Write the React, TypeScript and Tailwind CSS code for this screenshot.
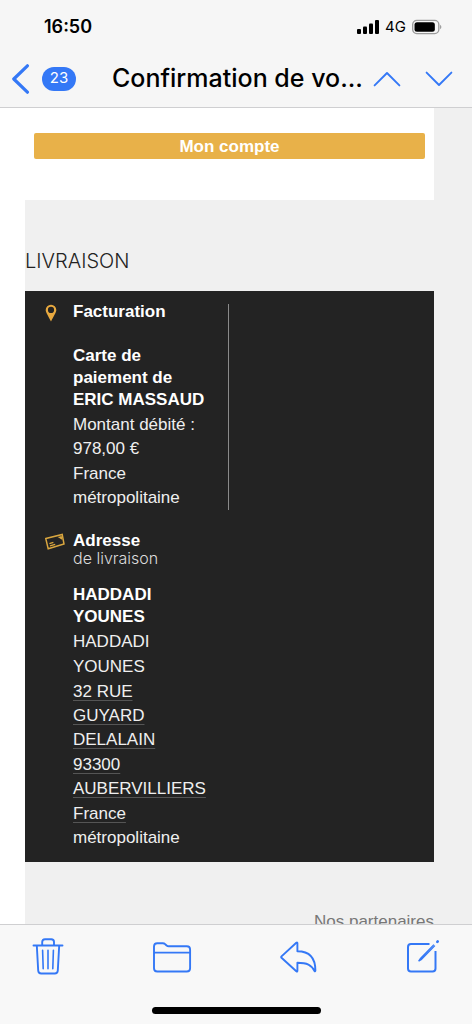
import type { ReactNode } from 'react';

function StatusBar() {
  return (
    <div className="flex h-[54px] items-center justify-between pr-[30px] pl-11 text-black">
      <time className="text-lg font-semibold">16:50</time>
      <div className="flex items-center gap-1.5">
        <svg width="22" height="14" viewBox="0 0 22 14" aria-hidden="true">
          <rect x="0" y="9" width="4" height="5" rx="1" />
          <rect x="6" y="6.5" width="4" height="7.5" rx="1" />
          <rect x="12" y="3.5" width="4" height="10.5" rx="1" />
          <rect x="18" y="0" width="4" height="14" rx="1" />
        </svg>
        <span className="text-[15px]">4G</span>
        <svg width="30" height="16" viewBox="0 0 31 16" aria-hidden="true">
          <rect x="0.7" y="1.2" width="27" height="13.6" rx="4.2" fill="none" stroke="#9b9b9b" strokeWidth="1.4" />
          <rect x="2.6" y="3" width="21" height="10" rx="2.6" />
          <path d="M29 5.7c1.8.7 1.8 3.9 0 4.6z" fill="#9b9b9b" />
        </svg>
      </div>
    </div>
  );
}

function Header() {
  return (
    <header className="border-b border-[#cfcfd1] bg-[#f6f6f6]">
      <StatusBar />
      <div className="flex h-[53px] items-center pr-[19px] pb-1 pl-3">
        <button type="button" aria-label="Retour" className="flex items-center gap-3 text-[#3478f6]">
          <svg width="18" height="30" viewBox="0 0 18 30" fill="none" stroke="currentColor" strokeWidth="3.2" strokeLinecap="round" strokeLinejoin="round" aria-hidden="true">
            <path d="M15.4 1.8 1.8 15l13.6 13.2" />
          </svg>
          <span className="flex h-6 w-[34px] items-center justify-center rounded-full bg-[#3478f6] text-[15px] text-white">23</span>
        </button>
        <h1 className="min-w-0 flex-1 truncate pl-9 text-[25px] font-medium text-black">Confirmation de vo...</h1>
        <div className="flex gap-6 text-[#3478f6]">
          <button type="button" aria-label="Message précédent">
            <svg width="28" height="16" viewBox="0 0 28 16" fill="none" stroke="currentColor" strokeWidth="1.9" strokeLinecap="round" strokeLinejoin="round" aria-hidden="true">
              <path d="M1.6 14.4 14 2l12.4 12.4" />
            </svg>
          </button>
          <button type="button" aria-label="Message suivant">
            <svg width="28" height="16" viewBox="0 0 28 16" fill="none" stroke="currentColor" strokeWidth="1.9" strokeLinecap="round" strokeLinejoin="round" aria-hidden="true">
              <path d="M1.6 1.6 14 14 26.4 1.6" />
            </svg>
          </button>
        </div>
      </div>
    </header>
  );
}

function Detail({ icon, title, subtitle, name, children }: { icon: ReactNode; title: string; subtitle?: string; name: string; children: ReactNode }) {
  return (
    <section className="flex">
      <div className="w-12 pl-5">{icon}</div>
      <div className="w-[135px]">
        <h3 className="text-[17px] leading-4 font-bold">{title}</h3>
        {subtitle && <p className="font-['Inter','Liberation_Sans',sans-serif] text-[16px] leading-[18px] font-light text-[#dcdcdc]">{subtitle}</p>}
        <p className={subtitle ? 'pt-[17px] pb-0.5 font-bold' : 'pt-[25px] pb-0.5 font-bold'}>{name}</p>
        <div className="flex flex-col gap-px leading-6 text-[#efefef]">{children}</div>
      </div>
    </section>
  );
}

const link = 'underline decoration-[#555] decoration-1 underline-offset-[3px]';

function Message() {
  return (
    <main className="min-h-0 flex-1 overflow-hidden pl-[25px] font-['Liberation_Sans',Arial,sans-serif]">
      <div className="min-h-full bg-[#f0f0f0] pr-[38px]">
        <div className="bg-white px-[9px] pt-[25px] pb-[41px]">
          <a href="#compte" className="block rounded-xs bg-[#e8b149] pt-0.5 text-center text-[17px] leading-6 font-bold text-white">Mon compte</a>
        </div>
        <h2 className="pt-[53px] pb-[22px] font-['Inter','Liberation_Sans',sans-serif] text-[20px] leading-4 font-light text-[#222]">LIVRAISON</h2>
        <div className="flex flex-col gap-[23px] bg-[#232323] pt-[13px] pb-3 text-[17px] leading-[22px] text-white">
          <div className="flex">
            <Detail
              title="Facturation"
              name="Carte de paiement de ERIC MASSAUD"
              icon={
                <svg width="12" height="18" viewBox="0 0 12 18" aria-hidden="true">
                  <path fillRule="evenodd" d="M6 .8a5.300 5.300 0 0 1 5.300 5.300c0 2.500-2.500 6-5.300 11.400C3.200 12.100.7 8.600.7 6.100A5.300 5.300 0 0 1 6 .8Zm0 2a3.100 3.100 0 1 0 0 6.200 3.100 3.100 0 0 0 0-6.200Z" fill="#e8a93f" />
                </svg>
              }
            >
              <p>Montant débité : 978,00 €</p>
              <p>France métropolitaine</p>
            </Detail>
            <div className="ml-5 w-px bg-[#8a8a8a]" />
          </div>
          <Detail
            title="Adresse"
            subtitle="de livraison"
            name="HADDADI YOUNES"
            icon={
              <svg width="20" height="17" viewBox="0 0 20 17" fill="none" stroke="#d9a63f" strokeWidth="1.5" aria-hidden="true">
                <path d="M.8 5.600 17.200 1.400 19 11 3.200 15.800Z" />
                <path d="M4.400 10.600l4-1.200M5 12.900l5.200-1.500" strokeWidth="1.300" />
                <path d="M14.200 4.300l2-.5.400 2Z" strokeWidth="1.200" fill="#d9a63f" />
              </svg>
            }
          >
            <p>HADDADI</p>
            <p>YOUNES</p>
            <p><a href="#adresse" className={link}>32 RUE GUYARD DELALAIN</a></p>
            <p><a href="#adresse" className={link}>93300 AUBERVILLIERS</a></p>
            <p><a href="#adresse" className={link}>France</a> métropolitaine</p>
          </Detail>
        </div>
        <p className="pt-[50px] text-right text-[17px] leading-5 text-[#777]">Nos partenaires</p>
      </div>
    </main>
  );
}

function Toolbar() {
  return (
    <footer className="border-t border-[#cfcfd1] bg-[#f8f8f8] pb-2.5">
      <div className="flex h-[82px] items-start justify-between px-8 pt-3 text-[#3478f6]">
        <button type="button" aria-label="Supprimer">
          <svg width="32" height="40" viewBox="0 0 32 40" fill="none" stroke="currentColor" strokeWidth="1.9" strokeLinecap="round" strokeLinejoin="round" aria-hidden="true">
            <path d="M1.500 8.500h29M10.200 8.500V5Q10.200 2.200 13 2.200h6.200q2.800 0 2.800 2.800V8.500M4.800 8.500l1.400 25q.2 3 3 3h13.600q2.800 0 3-3L27.200 8.500" />
            <path d="M10.600 13.200l.6 18.500M16 13.200v18.500M21.400 13.200l-.6 18.500" strokeWidth="1.600" />
          </svg>
        </button>
        <button type="button" aria-label="Déplacer">
          <svg width="40" height="40" viewBox="0 0 40 40" fill="none" stroke="currentColor" strokeWidth="1.9" strokeLinejoin="round" aria-hidden="true">
            <path d="M2 31.200V9.500Q2 6.200 5.300 6.200h5.400q1.500 0 2.500 1l1.400 1.300q.9.800 2.200.8h18q3.300 0 3.300 3.300v18.600q0 3.300-3.300 3.300H5.300Q2 34.500 2 31.200ZM2 15.600h36" />
          </svg>
        </button>
        <button type="button" aria-label="Répondre">
          <svg width="38" height="40" viewBox="0 0 38 40" fill="none" stroke="currentColor" strokeWidth="1.900" strokeLinejoin="round" aria-hidden="true">
            <path d="M16.300 5.800Q17.400 5 17.400 6.300V14.300C29.500 14.300 35.400 20.500 35.400 33.700Q35.200 35 34.400 33.900C31.500 27.800 27 25.800 17.400 25.800V33.700Q17.400 35.200 16.300 34.300L1.500 20.800Q.9 20.100 1.500 19.400Z" />
          </svg>
        </button>
        <button type="button" aria-label="Écrire">
          <svg width="34" height="40" viewBox="0 0 34 40" fill="none" stroke="currentColor" strokeWidth="2" strokeLinecap="butt" strokeLinejoin="round" aria-hidden="true">
            <path d="M23.500 7H5Q2 7 2 10v21.500q0 3 3 3h21.500q3 0 3-3V14" />
            <path d="M12.600 24.200 14.200 21.800 27.900 7.600M12.600 24.200l2.500-1.400L28.900 8.600" strokeWidth="1.300" />
            <path d="M31.300 4.900l.4-.4" strokeWidth="2.600" strokeLinecap="round" />
          </svg>
        </button>
      </div>
      <div className="mx-auto h-[7px] w-[169px] rounded-full bg-black" />
    </footer>
  );
}

export default function App() {
  return (
    <div className="flex h-screen flex-col overflow-hidden bg-white font-['Inter','Liberation_Sans',sans-serif]">
      <Header />
      <Message />
      <Toolbar />
    </div>
  );
}
